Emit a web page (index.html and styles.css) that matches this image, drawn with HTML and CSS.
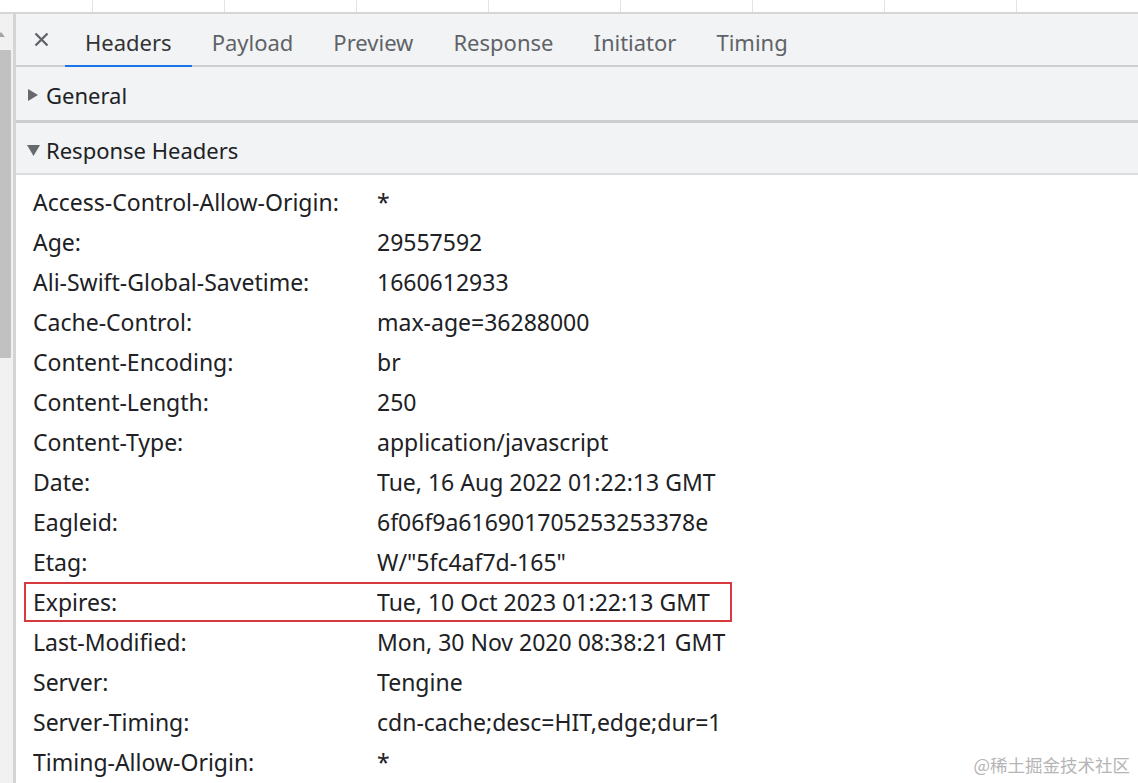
FILE: index.html
```html
<!DOCTYPE html>
<html lang="en">
<head>
<meta charset="utf-8">
<title>Headers</title>
<link rel="stylesheet" href="styles.css">
</head>
<body>
<div class="strip">
  <div class="cell first"></div>
  <div class="cell"></div>
  <div class="cell"></div>
  <div class="cell"></div>
  <div class="cell"></div>
  <div class="cell"></div>
  <div class="cell"></div>
  <div class="cell"></div>
  <div class="cell last"></div>
</div>
<div class="main">
  <div class="scrollbar">
    <div class="arrow"></div>
    <div class="thumb"></div>
  </div>
  <div class="panel">
    <div class="tabbar">
      <div class="close">
        <svg width="15" height="15" viewBox="0 0 15 15"><path d="M1.5 1.5 L13.5 13.5 M13.5 1.5 L1.5 13.5" stroke="#5f6368" stroke-width="2.3" fill="none"/></svg>
      </div>
      <div class="tab active">Headers</div>
      <div class="tab">Payload</div>
      <div class="tab">Preview</div>
      <div class="tab">Response</div>
      <div class="tab">Initiator</div>
      <div class="tab">Timing</div>
    </div>
    <div class="section general">
      <svg class="tri" width="19" height="12" viewBox="0 0 19 12"><path d="M1 0 L11 6 L1 12 Z" fill="#666a6e"/></svg>
      <span>General</span>
    </div>
    <div class="section response">
      <svg class="tri" width="19" height="12" viewBox="0 0 19 12"><path d="M0 1 L13 1 L6.5 12 Z" fill="#666a6e"/></svg>
      <span>Response Headers</span>
    </div>
    <div class="rows">
      <div class="row"><span class="name">Access-Control-Allow-Origin:</span><span class="value">*</span></div>
      <div class="row"><span class="name">Age:</span><span class="value">29557592</span></div>
      <div class="row"><span class="name">Ali-Swift-Global-Savetime:</span><span class="value">1660612933</span></div>
      <div class="row"><span class="name">Cache-Control:</span><span class="value">max-age=36288000</span></div>
      <div class="row"><span class="name">Content-Encoding:</span><span class="value">br</span></div>
      <div class="row"><span class="name">Content-Length:</span><span class="value">250</span></div>
      <div class="row"><span class="name">Content-Type:</span><span class="value">application/javascript</span></div>
      <div class="row"><span class="name">Date:</span><span class="value">Tue, 16 Aug 2022 01:22:13 GMT</span></div>
      <div class="row"><span class="name">Eagleid:</span><span class="value">6f06f9a616901705253253378e</span></div>
      <div class="row"><span class="name">Etag:</span><span class="value">W/"5fc4af7d-165"</span></div>
      <div class="row highlight"><span class="name">Expires:</span><span class="value">Tue, 10 Oct 2023 01:22:13 GMT</span></div>
      <div class="row"><span class="name">Last-Modified:</span><span class="value">Mon, 30 Nov 2020 08:38:21 GMT</span></div>
      <div class="row"><span class="name">Server:</span><span class="value">Tengine</span></div>
      <div class="row"><span class="name">Server-Timing:</span><span class="value">cdn-cache;desc=HIT,edge;dur=1</span></div>
      <div class="row"><span class="name">Timing-Allow-Origin:</span><span class="value">*</span></div>
    </div>
  </div>
</div>
<div class="watermark">@稀土掘金技术社区</div>
</body>
</html>
```

FILE: styles.css
```css
* { box-sizing: border-box; }
html, body {
  margin: 0;
  padding: 0;
  width: 1138px;
  height: 783px;
  overflow: hidden;
  background: #ffffff;
  font-family: "Noto Sans", "Open Sans", sans-serif;
  color: #202124;
}
.strip {
  display: flex;
  height: 14px;
  border-bottom: 2px solid #d6d6d6;
  background: #ffffff;
}
.cell {
  width: 132px;
  border-left: 1px solid #e3e3e3;
}
.cell.first { width: 92px; border-left: none; }
.cell.last { flex: 1; }
.main {
  display: flex;
  height: 769px;
}
.scrollbar {
  width: 16px;
  background: #f1f1f1;
  display: flex;
  flex-direction: column;
  border-right: 3px solid #d4d4d4;
}
.arrow {
  height: 36px;
  position: relative;
}
.arrow::before {
  content: "";
  position: absolute;
  left: -3px;
  top: 18px;
  border-left: 4px solid transparent;
  border-right: 4px solid transparent;
  border-bottom: 5px solid #a3a3a3;
}
.thumb {
  width: 11px;
  height: 308px;
  background: #c1c1c1;
}
.panel {
  flex: 1;
  display: flex;
  flex-direction: column;
  background: #ffffff;
}
.tabbar {
  display: flex;
  height: 53px;
  background: #f1f3f4;
  border-bottom: 2px solid #cbcdd1;
}
.close {
  width: 49px;
  display: flex;
  align-items: center;
  justify-content: center;
  padding-left: 2px;
  padding-bottom: 1px;
}
.tab {
  padding: 4px 20px 0;
  display: flex;
  align-items: center;
  font-size: 22px;
  color: #5f6368;
  margin-bottom: -2px;
  border-bottom: 2px solid transparent;
}
.tab.active {
  color: #333333;
  border-bottom-color: #1a73e8;
}
.section {
  display: flex;
  align-items: center;
  background: #f1f3f4;
  font-size: 22px;
  color: #202124;
  padding-left: 11px;
  padding-top: 3px;
}
.general {
  height: 56px;
  border-bottom: 3px solid #cbcdd1;
}
.response {
  height: 52px;
  border-bottom: 2px solid #dadce0;
}
.tri {
  flex-shrink: 0;
}
.rows {
  display: flex;
  flex-direction: column;
  padding: 7px 0 0 8px;
}
.row {
  display: flex;
  align-items: center;
  width: 708px;
  height: 40px;
  padding-left: 7px;
  border: 2px solid transparent;
  font-size: 23px;
  color: #202124;
}
.row.highlight {
  border-color: #d63a3f;
}
.name {
  width: 344px;
  flex-shrink: 0;
}
.value {
  white-space: nowrap;
}
.watermark {
  position: absolute;
  right: 8px;
  bottom: 6px;
  font-family: "Noto Sans CJK SC", sans-serif;
  font-size: 17.5px;
  color: #b5b5b5;
}
```
